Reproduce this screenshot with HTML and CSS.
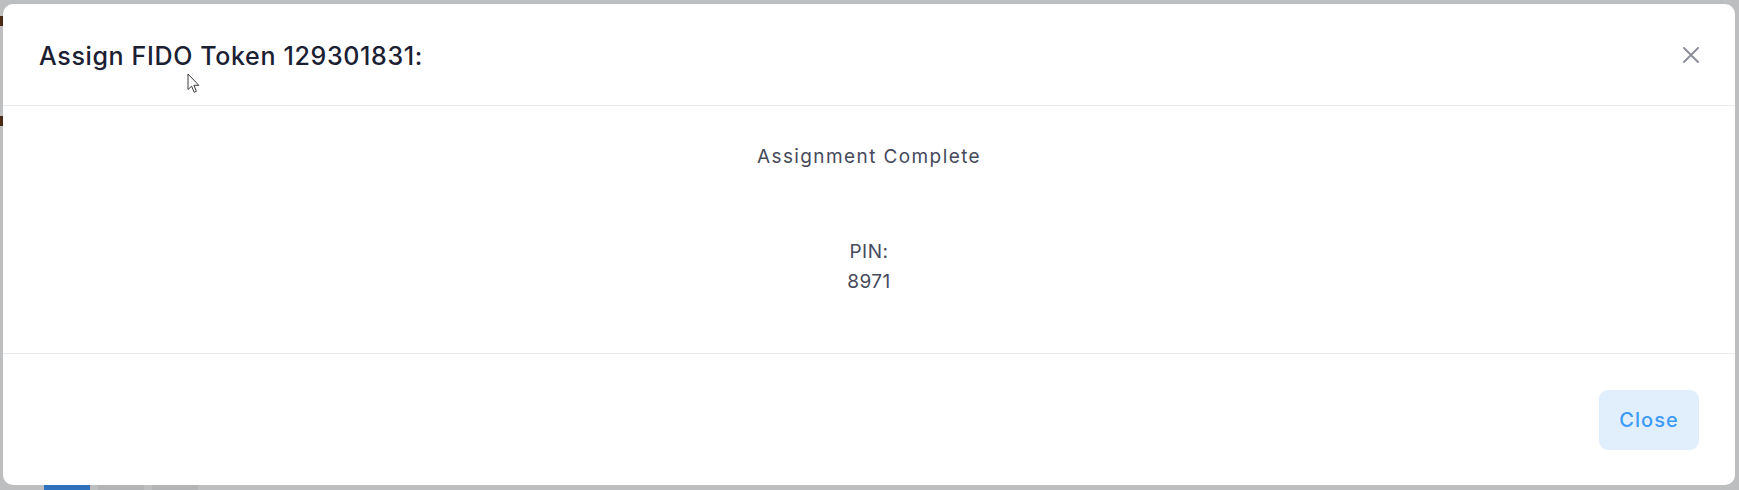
FILE: index.html
```html
<!DOCTYPE html>
<html lang="en">
<head>
<meta charset="utf-8">
<title>Assign FIDO Token</title>
<link rel="stylesheet" href="styles.css">
</head>
<body>
<div class="page">
  <div class="page-marks">
    <span class="mark mark-a"></span>
    <span class="mark mark-b"></span>
  </div>
  <div class="toolbar">
    <span class="tb-btn tb-primary"></span>
    <span class="tb-btn"></span>
    <span class="tb-btn"></span>
  </div>
</div>

<div class="modal" role="dialog" aria-labelledby="modal-title">
  <header class="modal-header">
    <h2 class="modal-title" id="modal-title">Assign FIDO Token 129301831:</h2>
    <button class="modal-x" aria-label="Close">
      <svg width="16" height="16" viewBox="0 0 16 16" aria-hidden="true">
        <path d="M1 1 L15 15 M15 1 L1 15" stroke="#8b8d9b" stroke-width="1.9" stroke-linecap="round" fill="none"/>
      </svg>
    </button>
  </header>
  <section class="modal-body">
    <p class="status">Assignment Complete</p>
    <div class="pin">
      <div>PIN:</div>
      <div>8971</div>
    </div>
  </section>
  <footer class="modal-footer">
    <button class="btn-close">Close</button>
  </footer>
</div>

<svg class="cursor" width="14" height="21" viewBox="0 0 14 21" aria-hidden="true">
  <path d="M1 1 L1 16.5 L4.6 13.2 L7.2 19.3 L9.4 18.3 L6.9 12.3 L11.8 12.3 Z" fill="#ffffff" stroke="#3a3a3a" stroke-width="1" stroke-linejoin="round"/>
</svg>
</body>
</html>
```
FILE: styles.css
```css
* { box-sizing: border-box; }

html, body {
  margin: 0;
  padding: 0;
}

body {
  width: 1739px;
  height: 490px;
  overflow: hidden;
  background: #bdbebf;
  font-family: "Inter", "Noto Sans", sans-serif;
  position: relative;
}

.page {
  height: 490px;
  display: flex;
  flex-direction: column;
  justify-content: space-between;
}

.page-marks {
  display: flex;
  flex-direction: column;
  gap: 90px;
  padding-top: 16px;
}

.mark {
  display: block;
  width: 3px;
  height: 10px;
  background: #4a2a14;
}

.toolbar {
  display: flex;
  gap: 8px;
  padding-left: 44px;
  height: 5px;
  overflow: hidden;
}

.tb-btn {
  display: block;
  width: 46px;
  height: 30px;
  background: #b3b4b6;
}

.tb-primary {
  background: #2f72bd;
}

.modal {
  position: absolute;
  left: 3px;
  top: 4px;
  width: 1732px;
  height: 481px;
  background: #ffffff;
  border-radius: 10px;
  display: flex;
  flex-direction: column;
}

.modal-header {
  height: 102px;
  padding: 0 36px;
  display: flex;
  align-items: center;
  justify-content: space-between;
  border-bottom: 1px solid #e9eaec;
}

.modal-title {
  margin: 0;
  font-size: 25px;
  font-weight: 500;
  color: #1b2033;
  letter-spacing: 0.65px;
  padding-top: 2px;
}

.modal-x {
  border: 0;
  background: transparent;
  padding: 0;
  width: 16px;
  height: 16px;
  display: flex;
  cursor: pointer;
}

.modal-body {
  height: 248px;
  border-bottom: 1px solid #e9eaec;
  padding-top: 37px;
  display: flex;
  flex-direction: column;
  align-items: center;
  color: #464a5c;
  font-size: 19px;
}

.status {
  margin: 0;
  line-height: 28px;
  letter-spacing: 1.4px;
}

.pin {
  margin-top: 66px;
  text-align: center;
  line-height: 30px;
  font-size: 19px;
  letter-spacing: 0.5px;
}

.modal-footer {
  flex: 1;
  padding: 0 36px;
  display: flex;
  align-items: center;
  justify-content: flex-end;
}

.btn-close {
  width: 100px;
  height: 60px;
  border: 0;
  border-radius: 9px;
  background: #e1effd;
  color: #3d9af7;
  font-family: "Inter", "Noto Sans", sans-serif;
  font-size: 20px;
  font-weight: 500;
  letter-spacing: 1px;
  cursor: pointer;
}

.cursor {
  position: absolute;
  left: 187px;
  top: 73px;
}
```
